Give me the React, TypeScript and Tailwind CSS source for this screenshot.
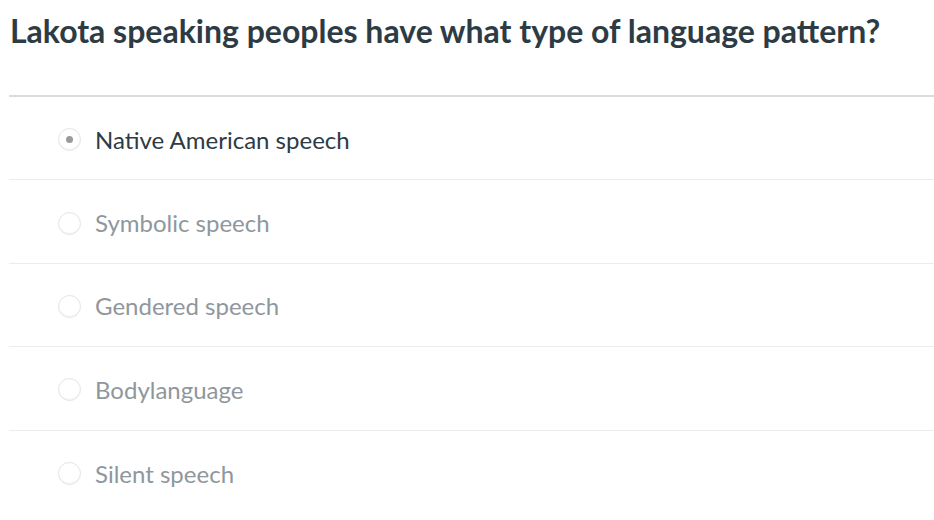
const options = [
  "Native American speech",
  "Symbolic speech",
  "Gendered speech",
  "Bodylanguage",
  "Silent speech",
];

const Radio = ({ checked }: { checked: boolean }) => (
  <span className="flex h-[23px] w-[23px] shrink-0 items-center justify-center rounded-full border border-[#e4e4e4] bg-white shadow-[inset_0_-1px_1px_rgba(0,0,0,0.06)]">
    {checked && <span className="h-[7px] w-[7px] rounded-full bg-[#9a9a9a]" />}
  </span>
);

export default function App() {
  const selected = 0;
  return (
    <div className="min-h-[520px] bg-white pl-[9px] font-['Lato',sans-serif]">
      <h1 className="pt-[9px] pl-px text-[32px] leading-[44px] font-bold text-[#2d3b45]">
        Lakota speaking peoples have what type of language pattern?
      </h1>
      <div className="mt-[42px] border-t-2 border-[#dcdcdc]">
        {options.map((label, i) => (
          <div
            key={label}
            className={`flex h-[83.4px] items-center gap-[14px] pt-[3px] pl-[49px] ${
              i < options.length - 1 ? "border-b border-[#ececec]" : ""
            }`}
          >
            <Radio checked={i === selected} />
            <span
              className={`text-[24px] ${
                i === selected ? "text-[#2d3b45]" : "text-[#8f979d]"
              }`}
            >
              {label}
            </span>
          </div>
        ))}
      </div>
    </div>
  );
}
